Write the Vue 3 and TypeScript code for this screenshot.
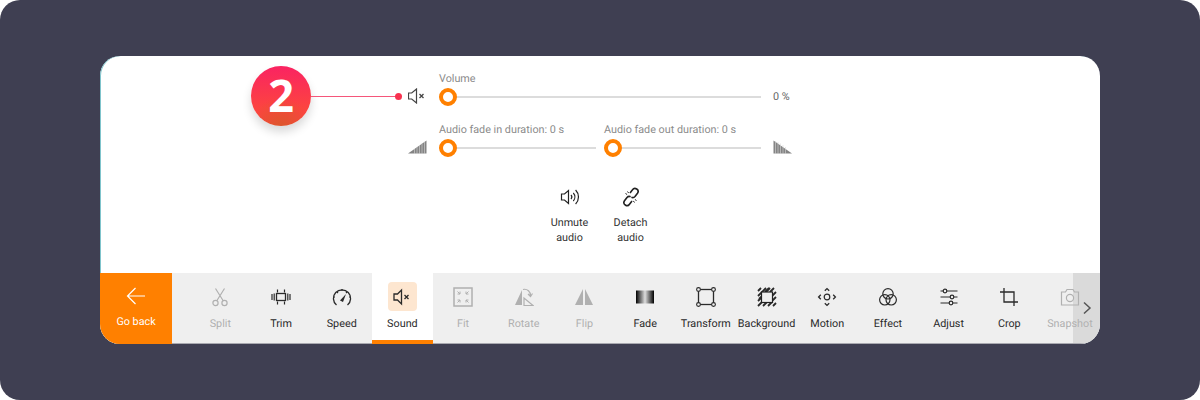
<script setup lang="ts">
interface Tool { label: string; icon: string; disabled?: boolean; active?: boolean }
const tools: Tool[] = [
  { label: 'Split', icon: 'split', disabled: true },
  { label: 'Trim', icon: 'trim' },
  { label: 'Speed', icon: 'speed' },
  { label: 'Sound', icon: 'sound', active: true },
  { label: 'Fit', icon: 'fit', disabled: true },
  { label: 'Rotate', icon: 'rotate', disabled: true },
  { label: 'Flip', icon: 'flip', disabled: true },
  { label: 'Fade', icon: 'fade' },
  { label: 'Transform', icon: 'transform' },
  { label: 'Background', icon: 'background' },
  { label: 'Motion', icon: 'motion' },
  { label: 'Effect', icon: 'effect' },
  { label: 'Adjust', icon: 'adjust' },
  { label: 'Crop', icon: 'crop' },
  { label: 'Snapshot', icon: 'snapshot', disabled: true },
]
</script>

<template>
  <div class="stage">
    <div class="card">
      <div class="callout">
        <div class="badge">2</div>
        <div class="line"></div>
        <div class="dot"></div>
      </div>

      <div class="panel">
        <div class="slider-row volume">
          <svg class="side" viewBox="0 0 18 18" width="18" height="18" fill="none" stroke="#444" stroke-width="1.2">
            <path d="M.5 6h3.200L8.500 2v14l-4.800-4H.5z" />
            <path d="M11.500 7l4 4M15.500 7l-4 4" stroke-width="1.300" />
          </svg>
          <div class="slider-col wide">
            <div class="lbl">Volume</div>
            <div class="slider"><span class="knob"></span></div>
          </div>
          <div class="value">0 %</div>
        </div>

        <div class="slider-row fades">
          <svg class="side" viewBox="0 0 19 14" width="19" height="14">
            <path d="M0 13.500 18.500 0.500v13z" fill="#848484" />
            <path d="M6.500 9v5M9 7v7M11.500 5v9M14 3.500V14M16.500 2v12" stroke="#d8d8d8" stroke-width=".6" />
          </svg>
          <div class="slider-col half">
            <div class="lbl">Audio fade in duration: 0 s</div>
            <div class="slider"><span class="knob"></span></div>
          </div>
          <div class="slider-col half second">
            <div class="lbl">Audio fade out duration: 0 s</div>
            <div class="slider"><span class="knob"></span></div>
          </div>
          <svg class="side end" viewBox="0 0 19 14" width="19" height="14">
            <path d="M0.500 0.500 19 13.500H0.500z" fill="#848484" />
            <path d="M2.500 1v13M5 2v12M7.500 3.500V14M10 5v9M12.500 7v7" stroke="#d8d8d8" stroke-width=".6" />
          </svg>
        </div>

        <div class="actions">
          <div class="action">
            <svg viewBox="0 0 20 20" width="20" height="20" fill="none" stroke="#222" stroke-width="1.2">
              <path d="M1.500 7h3l4-3.500v13l-4-3.500h-3z" />
              <path d="M11 8a3 3 0 0 1 0 4M13.300 6a6 6 0 0 1 0 8M15.600 3a10 10 0 0 1 0 14" />
            </svg>
            <span>Unmute<br />audio</span>
          </div>
          <div class="action">
            <svg viewBox="0 0 20 20" width="20" height="20" fill="none" stroke="#222" stroke-width="1.600">
              <path d="M9 6l2.500-3.200a3 3 0 0 1 5 3.400L14 9.500a3 3 0 0 1-3.600.8" />
              <path d="M11 14l-2.500 3.200a3 3 0 0 1-5-3.400L6 10.500a3 3 0 0 1 3.600-.8" />
              <path d="M6.500 4.500l1.200 1.600M4.500 6.500l1.600 1M15.500 13.500l-1.600-1M13.500 15.500l-1.200-1.600" stroke-width="1" />
            </svg>
            <span>Detach<br />audio</span>
          </div>
        </div>
      </div>

      <div class="toolbar">
        <div class="back">
          <svg viewBox="0 0 20 20" width="20" height="20" fill="none" stroke="#fff" stroke-width="1.200">
            <path d="M19 10H1.500M9.500 2l-8 8 8 8" />
          </svg>
          <span>Go back</span>
        </div>
        <div class="tools">
          <div
            v-for="t in tools"
            :key="t.label"
            class="tool"
            :class="{ disabled: t.disabled, active: t.active }"
          >
            <div class="icon-box">
              <svg viewBox="0 0 20 20" width="20" height="20" fill="none" stroke="currentColor" stroke-width="1.200">
                <template v-if="t.icon === 'split'">
                  <circle cx="5.500" cy="16" r="2.600" />
                  <circle cx="14.500" cy="16" r="2.600" />
                  <path d="M6.800 13.800 14.500 1.500M13.200 13.800 5.500 1.500" />
                </template>
                <template v-else-if="t.icon === 'trim'">
                  <rect x="5.500" y="6.500" width="9" height="7" stroke-width="1.300" />
                  <path d="M6.500 2.500v3M13.500 2.500v3M6.500 14.500v3M13.500 14.500v3M1 7v6M3.200 6.500v7M16.800 6.500v7M19 7v6" stroke-width="1.200" />
                </template>
                <template v-else-if="t.icon === 'speed'">
                  <path d="M4.500 18a8.600 8.600 0 1 1 11 0" stroke-width="1.300" />
                  <path d="M8 13.500 14 7l-3 8z" fill="currentColor" stroke="none" />
                  <path d="M10 2v2M3 10H1.500M18.500 10H17M5 5l1 1M15 5l-1 1" />
                </template>
                <template v-else-if="t.icon === 'sound'">
                  <path d="M2 7h3.500L9.500 3v14l-4-4H2z" stroke-width="1.300" />
                  <path d="M12.500 8l4 4M16.500 8l-4 4" stroke-width="1.300" />
                </template>
                <template v-else-if="t.icon === 'fit'">
                  <rect x="1" y="1" width="18" height="18" stroke-width="1.500" />
                  <path d="M4.500 4.500l2.500 2.500M7 4.500V7H4.500M15.500 4.500 13 7M13 4.500V7h2.500M4.500 15.500 7 13M7 15.500V13H4.500M15.500 15.500 13 13M13 15.500V13h2.500" stroke-width="1" />
                </template>
                <template v-else-if="t.icon === 'rotate'">
                  <path d="M1 18 8 3v15z" fill="currentColor" stroke="none" />
                  <path d="M10 18.500V11l9 7.500z" />
                  <path d="M9 2.500a6 6 0 0 1 7.500 6.500M18.500 6.500l-2 3-2.500-2.500" />
                </template>
                <template v-else-if="t.icon === 'flip'">
                  <path d="M1 18 9 2v16zM19 18 11 2v16z" fill="currentColor" stroke="none" />
                </template>
                <template v-else-if="t.icon === 'transform'">
                  <rect x="2.500" y="2.500" width="15" height="15" stroke-width="1.300" />
                  <g fill="#efefef" stroke-width="1.100">
                    <circle cx="2.500" cy="2.500" r="1.900" /><circle cx="17.500" cy="2.500" r="1.900" />
                    <circle cx="2.500" cy="17.500" r="1.900" /><circle cx="17.500" cy="17.500" r="1.900" />
                  </g>
                </template>
                <template v-else-if="t.icon === 'background'">
                  <g stroke-width="1.800">
                    <path d="M1 4 4 1M1 9l8-8M2 12 13 1M8 5l4-4M13 5l4-4M1 14l3-3M1 19l4-4M6 19l4-4M11 19l4-4M16 19l3-3M15 14l4-4M15 9l4-4" />
                  </g>
                  <rect x="4.500" y="5" width="11" height="10.500" fill="#efefef" stroke="#222" stroke-width="1.200" />
                </template>
                <template v-else-if="t.icon === 'motion'">
                  <circle cx="10" cy="10" r="2.800" />
                  <path d="M7.800 3.800 10 1.600l2.200 2.200M7.800 16.200l2.200 2.200 2.200-2.200M3.800 7.800 1.600 10l2.200 2.200M16.200 7.800l2.200 2.200-2.200 2.200" stroke-width="1.300" />
                </template>
                <template v-else-if="t.icon === 'effect'">
                  <circle cx="10" cy="6.800" r="5.200" />
                  <circle cx="6.800" cy="12.800" r="5.200" />
                  <circle cx="13.200" cy="12.800" r="5.200" />
                </template>
                <template v-else-if="t.icon === 'adjust'">
                  <path d="M1.500 4h17M1.500 10h17M1.500 16h17" />
                  <g fill="#efefef">
                    <circle cx="6" cy="4" r="1.800" /><circle cx="13" cy="10" r="1.800" /><circle cx="12" cy="16" r="1.800" />
                  </g>
                </template>
                <template v-else-if="t.icon === 'crop'">
                  <path d="M5 1v14h14M1 5h14v14" stroke-width="1.300" />
                </template>
                <template v-else-if="t.icon === 'snapshot'">
                  <path d="M1.500 5h4l1.500-2.500h6L14.500 5h4v13h-17z" />
                  <circle cx="10" cy="11" r="3.600" />
                </template>
                <template v-else-if="t.icon === 'fade'">
                  <rect x="1" y="3.500" width="18" height="13" fill="url(#fadeGrad)" stroke="none" />
                </template>
              </svg>
            </div>
            <span class="tool-label">{{ t.label }}</span>
          </div>
        </div>
        <div class="more">
          <svg viewBox="0 0 10 14" width="10" height="14" fill="none" stroke="#555" stroke-width="1.500">
            <path d="M2 1.500 8 7l-6 5.500" />
          </svg>
        </div>
        <svg class="defs" width="0" height="0">
          <defs>
            <linearGradient id="fadeGrad" x1="0" x2="1" y1="0" y2="0">
              <stop offset="0" stop-color="#000" />
              <stop offset=".5" stop-color="#ddd" />
              <stop offset="1" stop-color="#000" />
            </linearGradient>
          </defs>
        </svg>
      </div>
    </div>
  </div>
</template>

<style>
html, body { margin: 0; background: #fff; }
</style>

<style scoped>
.stage {
  width: 1200px;
  height: 400px;
  box-sizing: border-box;
  padding: 56px 100px;
  background: #3f3f52;
  border-radius: 20px;
  font-family: Roboto, "Open Sans", sans-serif;
  text-rendering: geometricPrecision;
}
.card {
  position: relative;
  width: 1000px;
  height: 288px;
  background: #fff;
  border-radius: 20px;
  overflow: hidden;
  display: flex;
  flex-direction: column;
  justify-content: space-between;
  box-shadow: inset 1px 0 0 #7fc4cc;
}
.callout {
  position: absolute;
  left: 151px;
  top: 10px;
  display: flex;
  align-items: center;
}
.badge {
  width: 60px;
  height: 60px;
  border-radius: 50%;
  background:
    radial-gradient(circle at 50% 105%, #d9582a 0%, rgba(217, 88, 42, 0) 45%),
    linear-gradient(180deg, #fa2362 0%, #fc4440 70%);
  box-shadow: 0 6px 10px rgba(0, 0, 0, 0.15);
  color: #fff;
  font: 700 45px/60px "Open Sans", sans-serif;
  text-align: center;
}
.line { width: 84px; height: 1px; background: #f5567a; }
.dot { width: 7px; height: 7px; border-radius: 50%; background: #f8324f; }

.panel {
  padding: 13px 0 0 308px;
  display: flex;
  flex-direction: column;
}
.slider-row { display: flex; align-items: flex-end; }
.side { flex: none; }
.volume .side { margin-right: 13px; margin-bottom: 0; }
.volume { height: 36px; }
.fades { height: 37px; margin-top: 14px; }
.fades .side { margin-right: 12px; margin-bottom: 2px; }
.fades .end { margin: 0 0 2px 12px; }
.lbl {
  font-size: 10.8px;
  line-height: 15px;
  color: #8b8b8b;
  white-space: nowrap;
}
.slider-col.wide { width: 322px; }
.slider-col.half { width: 157px; }
.slider-col.second { margin-left: 8px; }
.slider {
  position: relative;
  height: 2px;
  background: #dcdcdc;
  margin: 10px 0 7px;
}
.knob {
  position: absolute;
  left: 0;
  top: -8px;
  width: 18px;
  height: 18px;
  box-sizing: border-box;
  border: 4px solid #ff8000;
  border-radius: 50%;
  background: #fff;
}
.value {
  margin-left: 12px;
  font-size: 10.8px;
  line-height: 16px;
  color: #666;
}
.actions {
  display: flex;
  margin: 31px 0 0 131px;
}
.action {
  width: 61px;
  display: flex;
  flex-direction: column;
  align-items: center;
  font-size: 10.8px;
  line-height: 14.5px;
  color: #333;
  text-align: center;
}
.action svg { margin-bottom: 9px; }

.toolbar {
  position: relative;
  height: 71px;
  display: flex;
  background: #efefef;
  box-sizing: border-box;
  border-bottom: 1px solid #a9a9b0;
}
.back {
  width: 72px;
  height: 71px;
  flex: none;
  background: #ff8000;
  color: #fff;
  font-size: 10.8px;
  display: flex;
  flex-direction: column;
  align-items: center;
  padding-top: 13px;
  box-sizing: border-box;
}
.back svg { margin-bottom: 9px; }
.tools {
  display: flex;
  margin-left: 18px;
}
.tool {
  width: 60.7px;
  height: 70px;
  display: flex;
  flex-direction: column;
  align-items: center;
  padding-top: 9px;
  box-sizing: border-box;
  color: #2a2a2a;
  font-size: 10.8px;
}
.tool.disabled { color: #b0b0b0; }
.tool.active { background: #fff; border-bottom: 4px solid #ff8000; height: 71px; }
.icon-box {
  width: 29px;
  height: 29px;
  display: flex;
  align-items: center;
  justify-content: center;
  border-radius: 4px;
  margin-bottom: 5px;
}
.tool.active .icon-box { background: #fde6d0; }
.tool-label { white-space: nowrap; line-height: 15px; }
.more {
  position: absolute;
  right: 0;
  top: 0;
  bottom: 0;
  width: 27px;
  background: rgba(180, 180, 180, 0.35);
  display: flex;
  align-items: center;
  justify-content: center;
}
.defs { position: absolute; }
</style>
